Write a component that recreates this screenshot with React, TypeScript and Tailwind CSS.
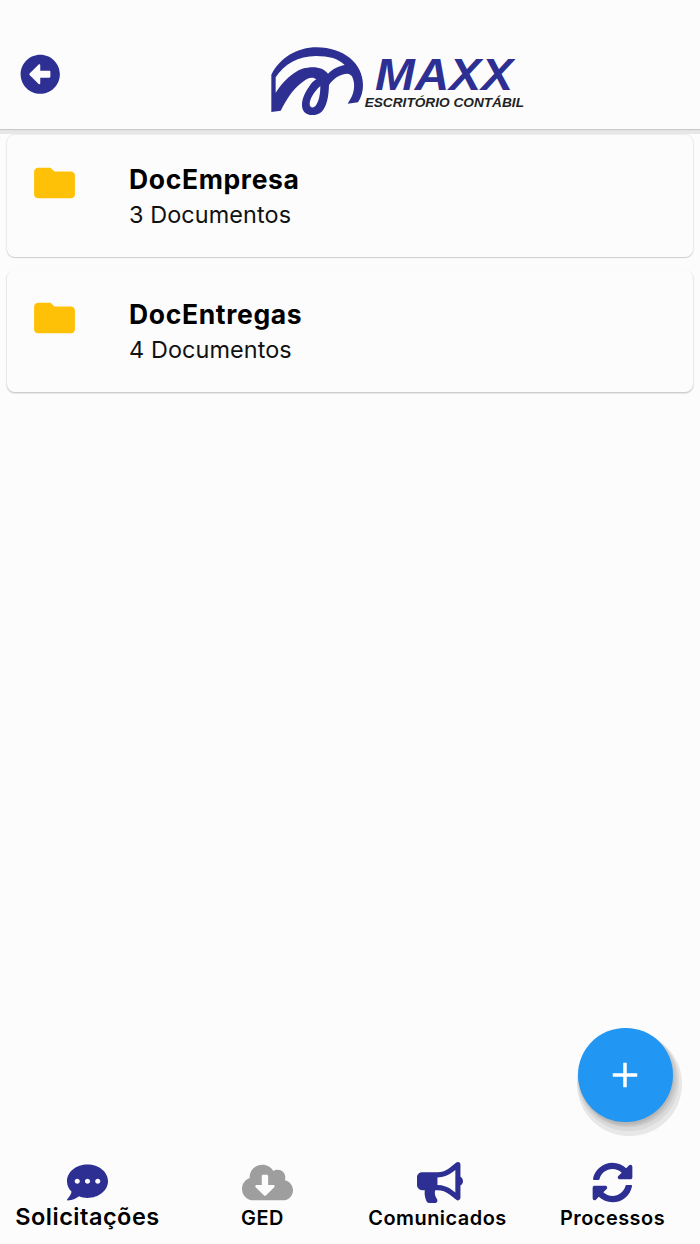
import type { ReactNode } from "react";
import {
  FaArrowAltCircleLeft,
  FaBullhorn,
  FaCloudDownloadAlt,
  FaCommentDots,
  FaSyncAlt,
} from "react-icons/fa";
import { MdAdd, MdFolder } from "react-icons/md";

function Logo() {
  return (
    <svg viewBox="0 0 825 240" className="h-[80px] w-[275px]" role="img" aria-label="MAXX Escritório Contábil">
      <path
        d="M34 216V104C60 53 111 22 170 22C251 22 309 71 309 135C309 155 304 172 294 187L263 191C277 171 284 152 282 130C280 112 275 103 262 101C241 101 219 116 207 135C206 169 201 199 185 215C171 228 144 229 132 215C119 197 128 166 148 139C154 130 161 122 169 118C158 108 141 114 125 128C97 148 79 180 62 212ZM47 158C70 123 97 97 127 86C160 77 190 81 204 101C219 86 235 79 254 75C235 56 207 48 168 48C115 48 72 73 47 112ZM181 138C161 156 149 177 149 192C149 204 161 206 168 196C177 183 181 162 181 138Z"
        fill="#2d2f92"
        fillRule="evenodd"
      />
      <text x="345" y="151" textLength="414" lengthAdjust="spacingAndGlyphs" fontFamily="Liberation Sans, sans-serif" fontSize="133" fontWeight="700" fontStyle="italic" fill="#2d2f92">MAXX</text>
      <text x="314" y="201" textLength="478" lengthAdjust="spacingAndGlyphs" fontFamily="Liberation Sans, sans-serif" fontSize="41" fontWeight="700" fontStyle="italic" fill="#222222">ESCRITÓRIO CONTÁBIL</text>
    </svg>
  );
}

function FolderCard({ name, count, top }: { name: string; count: number; top?: boolean }) {
  return (
    <article
      className={
        top
          ? "flex h-[122px] rounded-[8px] bg-[#fcfcfc] pl-[27px] pt-[27px] shadow-[0_1px_1px_#cfcfcf,0_0_1px_1px_#ececec]"
          : "flex h-[122px] rounded-[8px] bg-[#fcfcfc] pl-[27px] pt-[27px] shadow-[0_1px_1px_#cacaca,0_1px_1px_1px_#e9e9e9]"
      }
    >
      <MdFolder preserveAspectRatio="none" className="-ml-[4px] -mt-[2px] h-[46px] w-[49px] shrink-0 text-[#ffc107]" />
      <div className="ml-[50px]">
        <h2 className="text-[26.5px] leading-[35px] font-bold tracking-[0.65px] text-black">{name}</h2>
        <p className="text-[23.4px] leading-[35px] tracking-[0.1px] text-[#111111]">{count} Documentos</p>
      </div>
    </article>
  );
}

function NavItem({ label, icon, large }: { label: string; icon: ReactNode; large?: boolean }) {
  return (
    <button className="flex w-[175px] flex-col items-center text-[#2d2f92]">
      <span className="flex h-[41px] items-center">{icon}</span>
      <span className={large ? "text-[23.5px] leading-[27px] font-semibold tracking-[0.5px] whitespace-nowrap text-black" : "mt-px text-[19.9px] leading-[28px] font-semibold tracking-[0.5px] text-black"}>
        {label}
      </span>
    </button>
  );
}

export default function App() {
  return (
    <div className="relative flex h-[1244px] w-[700px] flex-col overflow-hidden bg-[#fcfcfc] font-['Inter',sans-serif]">
      <header className="flex h-[129px] shrink-0 items-start bg-[#fcfcfc] pl-[20px] pt-[40px] shadow-[0_1px_1px_#cacaca,0_5px_0_#e7e7e7]">
        <button aria-label="Voltar" className="mt-[14px]">
          <FaArrowAltCircleLeft className="size-[40.5px] text-[#2d2f92]" />
        </button>
        <div className="ml-[199.5px]">
          <Logo />
        </div>
      </header>
      <main className="flex flex-1 flex-col gap-[13px] px-[7px] pt-[6px]">
        <FolderCard top name="DocEmpresa" count={3} />
        <FolderCard name="DocEntregas" count={4} />
      </main>
      <button aria-label="Adicionar" className="absolute left-[578px] top-[1027.5px] flex size-[94.5px] items-center justify-center rounded-full bg-[#2196f3] text-white shadow-[1px_3px_3px_#b4b4b4,3px_4px_0_1px_#cfcfcf,3px_6px_0_3px_#dadada,4px_9px_0_5px_#e7e7e7]">
        <MdAdd className="size-[42px]" />
      </button>
      <nav className="flex h-[82px] shrink-0">
        <NavItem large label="Solicitações" icon={<FaCommentDots className="size-[41px]" />} />
        <NavItem label="GED" icon={<FaCloudDownloadAlt className="ml-[10px] h-[41px] w-[51px] text-[#9e9e9e]" />} />
        <NavItem label="Comunicados" icon={<FaBullhorn className="ml-[5px] h-[41px] w-[46px]" />} />
        <NavItem label="Processos" icon={<FaSyncAlt className="size-[41px]" />} />
      </nav>
    </div>
  );
}
